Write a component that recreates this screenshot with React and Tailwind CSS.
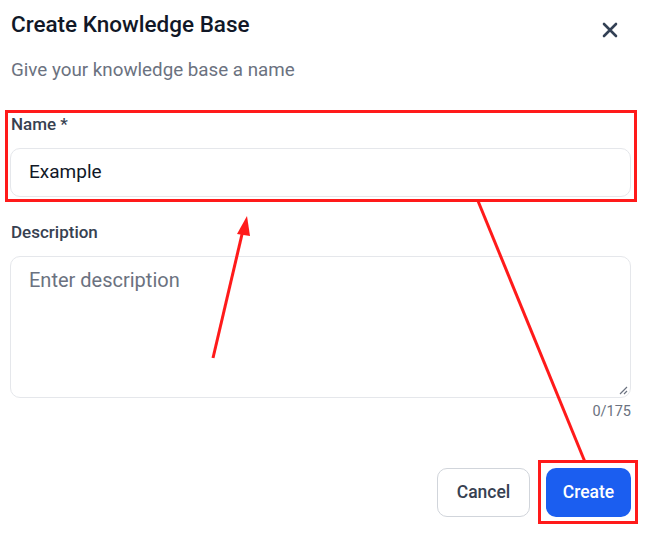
import React from "react";

export default function App() {
  return (
    <div className="relative w-[651px] h-[537px] bg-white overflow-hidden font-['Roboto',sans-serif]">
      <div className="px-[10px] pt-[10px]">
        <div className="flex items-start justify-between">
          <div className="pl-[1px]">
            <h2 className="text-[22.5px] leading-[28px] font-medium text-[#111827]">Create Knowledge Base</h2>
            <p className="mt-[20px] text-[18.8px] leading-[24px] text-[#6b7280]">Give your knowledge base a name</p>
          </div>
          <button className="mt-[12px] mr-[23px] text-[#334155]" aria-label="Close">
            <svg width="16" height="16" viewBox="0 0 16 16" fill="none" stroke="currentColor" strokeWidth="2.6" strokeLinecap="round">
              <path d="M2 2L14 14M14 2L2 14" />
            </svg>
          </button>
        </div>

        <div className="mt-[31px]">
          <label className="block pl-[1px] text-[17px] leading-[22px] font-medium text-[#374151]">Name *</label>
          <div className="mt-[13px] h-[49px] w-[621px] rounded-[10px] border border-[#e5e7eb] flex items-center px-[18px] text-[19px] text-[#111827]">
            Example
          </div>
        </div>

        <div className="mt-[24px]">
          <label className="block pl-[1px] text-[17px] leading-[22px] font-medium text-[#374151]">Description</label>
          <div className="relative mt-[13px] h-[142px] w-[621px] rounded-[10px] border border-[#e5e7eb] px-[18px] pt-[10px] text-[20px] leading-[26px] text-[#6b7280]">
            Enter description
            <svg className="absolute right-[2px] bottom-[2px]" width="9" height="9" viewBox="0 0 9 9" stroke="#6b7280" strokeWidth="1.2">
              <path d="M8 1L1 8M8 5L5 8" />
            </svg>
          </div>
          <div className="w-[621px] mt-[4px] text-right text-[14.5px] leading-[20px] text-[#6b7280]">0/175</div>
        </div>

        <div className="w-[621px] mt-[46px] flex justify-end gap-[16px]">
          <button className="h-[49px] w-[93px] rounded-[10px] border border-[#d1d5db] bg-white text-[17.5px] font-medium text-[#374151]">Cancel</button>
          <button className="h-[49px] w-[85px] rounded-[10px] bg-[#1b5ef0] text-[17.5px] font-medium text-white">Create</button>
        </div>
      </div>

      {/* annotations */}
      <div className="absolute left-[5px] top-[110px] w-[632px] h-[92px] border-[3px] border-[#ff1a1a] pointer-events-none" />
      <div className="absolute left-[538px] top-[460px] w-[100px] h-[64px] border-[3px] border-[#ff1a1a] pointer-events-none" />
      <svg className="absolute inset-0 pointer-events-none" width="651" height="537" viewBox="0 0 651 537">
        <line x1="478" y1="201" x2="585" y2="462" stroke="#ff1a1a" strokeWidth="3" />
        <line x1="213" y1="358" x2="243" y2="230" stroke="#ff1a1a" strokeWidth="3" />
        <polygon points="247,216 237,234 250,236" fill="#ff1a1a" />
      </svg>
    </div>
  );
}
